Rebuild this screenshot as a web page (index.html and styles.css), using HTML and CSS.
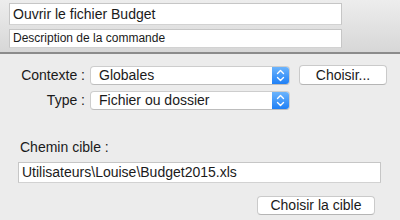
FILE: index.html
```html
<!DOCTYPE html>
<html lang="fr">
<head>
<meta charset="utf-8">
<link rel="stylesheet" href="styles.css">
</head>
<body>
<div class="header">
  <div class="field field-title">Ouvrir le fichier Budget</div>
  <div class="field field-desc">Description de la commande</div>
</div>
<div class="main">
  <div class="grid">
    <div class="label">Contexte :</div>
    <div class="popup"><span class="popup-text">Globales</span><span class="stepper"><svg width="9" height="13" viewBox="0 0 9 13"><path d="M1.5 4.5 L4.5 1.5 L7.5 4.5 M1.5 8.5 L4.5 11.5 L7.5 8.5" fill="none" stroke="#fff" stroke-width="1.4" stroke-linecap="round" stroke-linejoin="round"/></svg></span></div>
    <div class="button btn-choose">Choisir...</div>
    <div class="label">Type :</div>
    <div class="popup"><span class="popup-text">Fichier ou dossier</span><span class="stepper"><svg width="9" height="13" viewBox="0 0 9 13"><path d="M1.5 4.5 L4.5 1.5 L7.5 4.5 M1.5 8.5 L4.5 11.5 L7.5 8.5" fill="none" stroke="#fff" stroke-width="1.4" stroke-linecap="round" stroke-linejoin="round"/></svg></span></div>
  </div>
  <div class="path-label">Chemin cible :</div>
  <div class="field field-path">Utilisateurs\Louise\Budget2015.xls</div>
  <div class="actions">
    <div class="button btn-target">Choisir la cible</div>
  </div>
</div>
</body>
</html>
```
FILE: styles.css
```css
html, body {
  margin: 0;
  padding: 0;
}
body {
  width: 400px;
  height: 220px;
  overflow: hidden;
  background: #ececec;
  font-family: "Liberation Sans", Arial, sans-serif;
  font-size: 14px;
  color: #1a1a1a;
}
.header {
  box-sizing: border-box;
  height: 54px;
  padding: 3px 0 0 9px;
  background: linear-gradient(#ededed, #d7d7d7);
  border-bottom: 2px solid #8b8b8b;
  display: flex;
  flex-direction: column;
  gap: 4px;
}
.field {
  box-sizing: border-box;
  background: #fff;
  border: 1px solid #c6c6c6;
  border-bottom-color: #d2d2d2;
  white-space: nowrap;
}
.field-title {
  width: 333px;
  height: 22px;
  line-height: 20px;
  padding-left: 3px;
  font-size: 14px;
}
.field-desc {
  width: 333px;
  height: 19px;
  line-height: 17px;
  padding-left: 3px;
  font-size: 12px;
}
.main {
  padding: 11px 0 0 18px;
}
.grid {
  display: grid;
  grid-template-columns: 67px 200px 88px;
  grid-auto-rows: 20px;
  column-gap: 5px;
  row-gap: 5px;
  align-items: center;
}
.grid .btn-choose {
  margin-left: 4px;
}
.label {
  text-align: right;
  line-height: 20px;
  white-space: nowrap;
}
.popup {
  box-sizing: border-box;
  height: 19px;
  display: flex;
  align-items: stretch;
  background: #fff;
  border: 1px solid #cdcdcd;
  border-bottom-color: #bdbdbd;
  border-radius: 4px;
  overflow: hidden;
}
.popup-text {
  flex: 1;
  padding-left: 8px;
  line-height: 17px;
  white-space: nowrap;
}
.stepper {
  width: 17px;
  display: flex;
  align-items: center;
  justify-content: center;
  background: linear-gradient(#6cb4fc, #1f80f6);
}
.button {
  box-sizing: border-box;
  height: 20px;
  line-height: 18px;
  text-align: center;
  background: #fff;
  border: 1px solid #cacaca;
  border-bottom-color: #b5b5b5;
  border-radius: 4px;
  white-space: nowrap;
}
.btn-choose {
  width: 88px;
}
.path-label {
  margin-top: 29px;
  padding-left: 2px;
  line-height: 16px;
}
.field-path {
  margin-top: 7px;
  width: 363px;
  height: 21px;
  line-height: 19px;
  padding-left: 3px;
}
.actions {
  width: 363px;
  display: flex;
  justify-content: flex-end;
  margin-top: 13px;
}
.btn-target {
  width: 118px;
  height: 19px;
  line-height: 17px;
  margin-right: 6px;
}
```
